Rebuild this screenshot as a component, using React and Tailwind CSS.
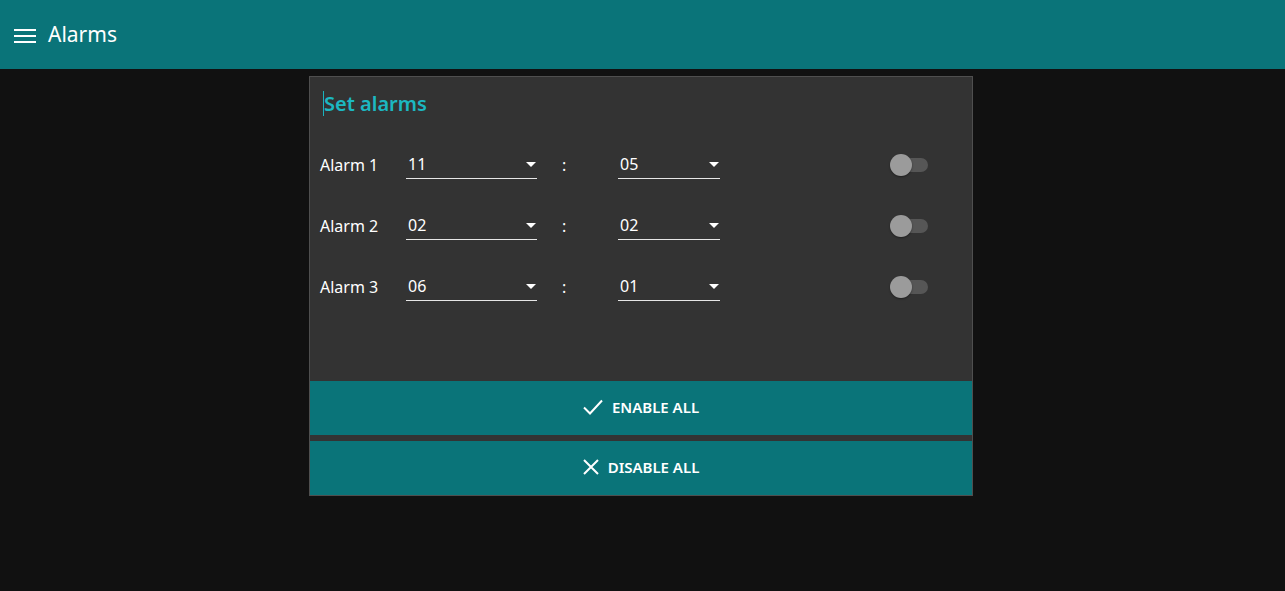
import React, { useState } from 'react';

const alarmsInit = [
  { id: 1, hour: '11', minute: '05', on: false },
  { id: 2, hour: '02', minute: '02', on: false },
  { id: 3, hour: '06', minute: '01', on: false },
];

const Caret = () => (
  <svg width="10" height="5" viewBox="0 0 10 5" className="shrink-0">
    <path d="M0 0 L10 0 L5 5 Z" fill="#ffffff" />
  </svg>
);

const Select = ({ value, width }) => (
  <div className={`flex items-center justify-between h-[28px] border-b border-[#e6e6e6] pl-[2px] pr-[1px] ${width}`}>
    <span className="text-[16px] text-white">{value}</span>
    <Caret />
  </div>
);

const Toggle = ({ on, onClick }) => (
  <button onClick={onClick} className="relative w-[40px] h-[24px] flex items-center">
    <span className="absolute left-[2px] w-[36px] h-[14px] rounded-full bg-[#565656]" />
    <span className="absolute left-0 w-[22px] h-[22px] rounded-full bg-[#9b9b9b] shadow-[0_1px_2px_rgba(0,0,0,0.4)]" />
  </button>
);

const App = () => {
  const [alarms, setAlarms] = useState(alarmsInit);

  const setAll = (on) => setAlarms(prev => prev.map(a => ({ ...a, on })));

  return (
    <div className="min-h-[591px] bg-[#111111] font-['Noto_Sans','Open_Sans',sans-serif]">
      <header className="h-[69px] bg-[#0a7479] flex items-center px-[14px]">
        <svg width="22" height="16" viewBox="0 0 22 16" className="mt-[2px]">
          <rect x="0" y="1" width="22" height="2" fill="#ffffff" />
          <rect x="0" y="7" width="22" height="2" fill="#ffffff" />
          <rect x="0" y="13" width="22" height="2" fill="#ffffff" />
        </svg>
        <h1 className="ml-[12px] text-[21px] text-white">Alarms</h1>
      </header>

      <div className="pt-[7px] pr-[3px]">
        <div className="mx-auto w-[664px] bg-[#333333] border border-[#4f4f4f]">
          <div className="h-[57px] pt-[13px] pl-[13px] flex items-start">
            <span className="w-px h-[25px] bg-[#1ab3bd] mt-[1px]" />
            <h2 className="text-[20px] leading-[28px] font-semibold text-[#1cb8c2]">Set alarms</h2>
          </div>

          <div>
            {alarms.map(a => (
              <div key={a.id} className="h-[61px] flex items-center pl-[10px]">
                <span className="w-[86px] text-[16px] text-white">Alarm {a.id}</span>
                <Select value={a.hour} width="w-[131px]" />
                <span className="w-[81px] pl-[25px] text-[16px] text-white">:</span>
                <Select value={a.minute} width="w-[102px]" />
                <div className="ml-[170px]">
                  <Toggle on={a.on} onClick={() => setAlarms(prev => prev.map(x => x.id === a.id ? { ...x, on: !x.on } : x))} />
                </div>
              </div>
            ))}
          </div>

          <div className="h-[64px]" />

          <button
            onClick={() => setAll(true)}
            className="w-full h-[54px] bg-[#0a7479] flex items-center justify-center gap-[9px] text-white text-[15px] font-semibold pb-[2px]"
          >
            <svg width="20" height="16" viewBox="0 0 20 16">
              <path d="M1 8.5 L7 14.5 L19 1.5" stroke="#ffffff" strokeWidth="2" fill="none" />
            </svg>
            ENABLE ALL
          </button>
          <div className="h-[6px]" />
          <button
            onClick={() => setAll(false)}
            className="w-full h-[54px] bg-[#0a7479] flex items-center justify-center gap-[9px] text-white text-[15px] font-semibold pb-[2px]"
          >
            <svg width="16" height="16" viewBox="0 0 16 16">
              <path d="M1 1 L15 15 M15 1 L1 15" stroke="#ffffff" strokeWidth="2" fill="none" />
            </svg>
            DISABLE ALL
          </button>
        </div>
      </div>
    </div>
  );
};

export default App;
